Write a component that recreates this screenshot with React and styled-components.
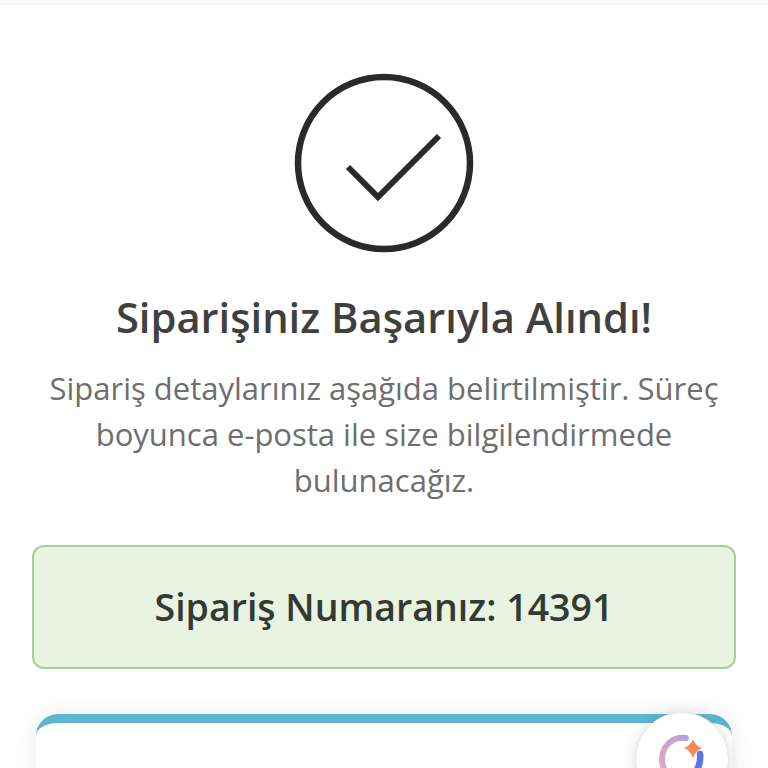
import styled, { createGlobalStyle } from 'styled-components'

const GlobalStyle = createGlobalStyle`
  html, body {
    margin: 0;
    padding: 0;
    height: 768px;
    overflow: hidden;
    background: #fff;
    font-family: "Open Sans", "Liberation Sans", sans-serif;
  }
`

const Page = styled.div`
  position: relative;
  height: 768px;
  overflow: hidden;
  background: #fff;
`

const TopBar = styled.div`
  height: 3px;
  background: #fafafa;
  border-bottom: 2px solid #f2f2f2;
`

const Content = styled.main`
  display: flex;
  flex-direction: column;
  align-items: center;
  padding: 68px 32px 0;
`

const SuccessIcon = styled.svg`
  display: block;
  width: 180px;
  height: 180px;
  margin-bottom: 36px;
`

const Title = styled.h1`
  margin: 0 0 20px;
  font-size: 41.7px;
  line-height: 56px;
  font-weight: 600;
  color: #404040;
  text-align: center;
`

const Description = styled.p`
  margin: 0 0 42px;
  font-size: 31px;
  line-height: 46px;
  font-weight: 400;
  color: #6e6e6e;
  text-align: center;
`

const OrderBox = styled.div`
  box-sizing: border-box;
  width: 704px;
  height: 124px;
  display: flex;
  align-items: center;
  justify-content: center;
  padding-bottom: 2px;
  background: #e8f3e1;
  border: 2px solid #a9cf90;
  border-radius: 12px;
  font-size: 37.5px;
  font-weight: 600;
  color: #333a31;
`

const DetailCard = styled.section`
  box-sizing: border-box;
  width: 696px;
  height: 120px;
  margin-top: 45px;
  background: #fff;
  border-top: 9px solid #5fb6d2;
  border-radius: 22px;
  box-shadow: 0 0 24px rgba(0, 0, 0, 0.08);
`

const AssistantButton = styled.button`
  position: absolute;
  left: 635px;
  top: 712px;
  width: 94px;
  height: 94px;
  padding: 0;
  border: 1px solid #e4e4e4;
  border-radius: 50%;
  background: #fff;
  box-shadow: 0 2px 14px rgba(0, 0, 0, 0.14);
`

const AssistantLogo = styled.svg`
  display: block;
  width: 94px;
  height: 94px;
`

const App = () => (
  <Page>
    <GlobalStyle />
    <TopBar />
    <Content>
      <SuccessIcon viewBox="0 0 180 180" fill="none" stroke="#2a2a2a">
        <circle cx="90" cy="90" r="86" strokeWidth="6.5" />
        <path d="M54 94 L84 124 L145 63" strokeWidth="6" />
      </SuccessIcon>
      <Title>Siparişiniz Başarıyla Alındı!</Title>
      <Description>
        Sipariş detaylarınız aşağıda belirtilmiştir. Süreç
        <br />
        boyunca e-posta ile size bilgilendirmede
        <br />
        bulunacağız.
      </Description>
      <OrderBox>Sipariş Numaranız: 14391</OrderBox>
      <DetailCard />
    </Content>
    <AssistantButton aria-label="Asistan">
      <AssistantLogo viewBox="0 0 94 94" fill="none">
        <defs>
          <linearGradient id="ringGrad" x1="1" y1="0" x2="0" y2="1">
            <stop offset="0" stopColor="#b9a0e0" />
            <stop offset="1" stopColor="#e6a9b8" />
          </linearGradient>
        </defs>
        <path d="M50 25 C37 23 26 33 26 46 C26 54 30 61 36 66" stroke="url(#ringGrad)" strokeWidth="6" strokeLinecap="round" />
        <path d="M57 26 C59 31 61 33 66 35 C61 37 59 40 57 45 C55 40 53 37 48 35 C53 33 55 31 57 26 Z" fill="#f58a55" />
        <path d="M64 41 C65 48 62 56 58 62" stroke="#5b72e8" strokeWidth="6.5" strokeLinecap="round" />
      </AssistantLogo>
    </AssistantButton>
  </Page>
)

export default App
